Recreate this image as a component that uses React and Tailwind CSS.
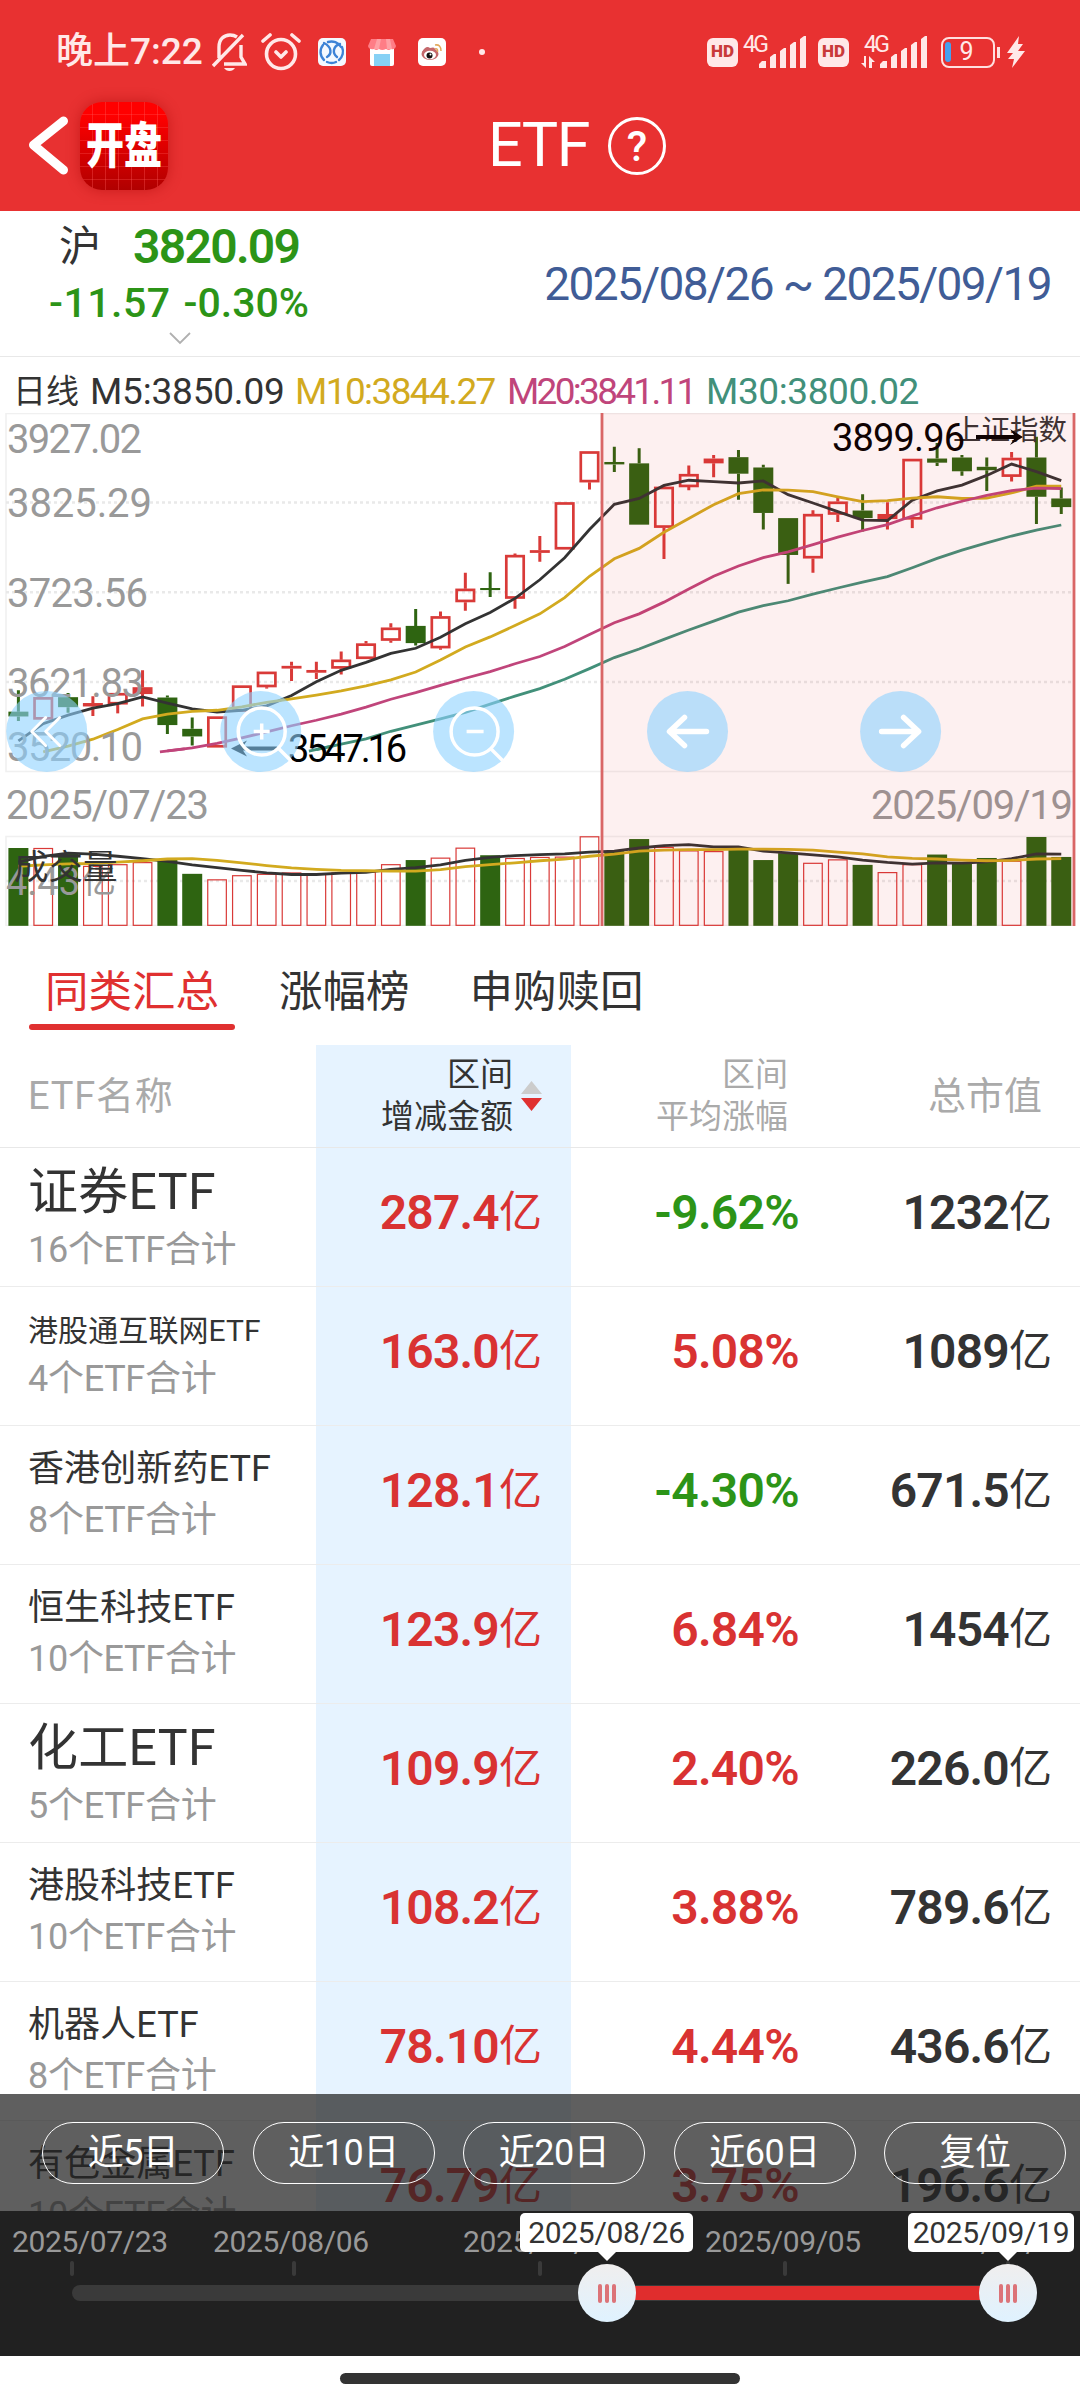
import clsx from 'clsx'

const candles = [
  // [direction, high, bodyTop, bodyBottom, low, volumeTop]
  ['down', 843, 905, 919, 932, 1301],
  ['up', 863, 863, 928, 928, 1301],
  ['down', 851, 863, 892, 908, 1316],
  ['up', 860, 880, 890, 918, 1353],
  ['up', 851, 851, 884, 910, 1348],
  ['up', 785, 834, 854, 890, 1342],
  ['down', 858, 864, 944, 970, 1335],
  ['down', 922, 955, 977, 1003, 1376],
  ['up', 919, 919, 1009, 1009, 1392],
  ['up', 829, 829, 905, 905, 1380],
  ['up', 789, 789, 834, 838, 1376],
  ['up', 760, 772, 780, 816, 1372],
  ['up', 760, 784, 792, 810, 1376],
  ['up', 730, 754, 780, 797, 1372],
  ['up', 700, 707, 752, 752, 1370],
  ['up', 648, 661, 699, 705, 1348],
  ['down', 607, 656, 706, 713, 1336],
  ['up', 614, 628, 721, 725, 1329],
  ['up', 502, 548, 587, 612, 1300],
  ['down', 500, 546, 552, 572, 1322],
  ['up', 446, 450, 577, 606, 1330],
  ['up', 395, 436, 444, 470, 1327],
  ['up', 297, 297, 434, 434, 1326],
  ['up', 149, 149, 239, 260, 1267],
  ['down', 136, 180, 187, 209, 1310],
  ['down', 140, 184, 362, 362, 1275],
  ['up', 250, 252, 371, 462, 1298],
  ['up', 190, 215, 253, 262, 1308],
  ['up', 160, 170, 184, 224, 1310],
  ['down', 145, 166, 214, 290, 1305],
  ['down', 188, 196, 328, 376, 1336],
  ['down', 343, 343, 450, 534, 1316],
  ['up', 320, 331, 460, 502, 1344],
  ['up', 283, 295, 333, 354, 1334],
  ['down', 274, 321, 343, 382, 1350],
  ['up', 297, 331, 346, 376, 1371],
  ['up', 171, 171, 347, 372, 1348],
  ['down', 125, 170, 182, 192, 1320],
  ['down', 160, 167, 207, 220, 1345],
  ['down', 167, 194, 204, 264, 1330],
  ['up', 151, 168, 223, 237, 1338],
  ['down', 107, 167, 281, 360, 1269],
  ['down', 254, 286, 311, 331, 1327],
]

const maLines = [
  { color: '#333333', start: 0, data: [990, 940, 915, 895, 882, 862, 880, 897, 906, 901, 888, 858, 818, 785, 762, 736, 721, 689, 650, 617, 576, 522, 458, 376, 303, 286, 248, 233, 237, 241, 235, 275, 299, 324, 349, 350, 291, 264, 247, 219, 186, 208, 234] },
  { color: '#d2aa1f', start: 1, data: [1022, 1005, 985, 957, 926, 912, 904, 901, 891, 878, 868, 857, 845, 830, 813, 790, 755, 717, 688, 655, 621, 574, 512, 461, 431, 384, 344, 304, 272, 261, 262, 266, 281, 295, 292, 285, 281, 286, 285, 270, 250, 250] },
  { color: '#c0457b', start: 5.7, data: [1022, 1013] },
  { color: '#c0457b', start: 6, data: [1019, 1010, 997, 981, 964, 946, 930, 912, 892, 869, 850, 829, 808, 789, 766, 745, 716, 681, 647, 621, 587, 549, 512, 482, 458, 441, 420, 398, 379, 362, 337, 313, 294, 277, 263, 256, 257] },
  { color: '#42907a', start: 11.7, data: [1020, 1004] },
  { color: '#42907a', start: 12, data: [1015, 999, 984, 962, 944, 926, 907, 883, 860, 838, 811, 780, 748, 723, 695, 668, 642, 616, 597, 583, 564, 546, 529, 513, 487, 460, 436, 415, 395, 378, 363] },
  { color: '#333333', start: 0, data: [1342, 1325, 1316, 1319, 1325, 1332, 1340, 1350, 1358, 1366, 1373, 1378, 1378, 1374, 1372, 1363, 1358, 1350, 1337, 1328, 1323, 1320, 1318, 1313, 1310, 1301, 1294, 1291, 1298, 1298, 1310, 1315, 1321, 1327, 1336, 1343, 1348, 1344, 1345, 1341, 1332, 1318, 1319] },
  { color: '#d2aa1f', start: 0, data: [1354, 1350, 1347, 1346, 1342, 1338, 1333, 1332, 1337, 1344, 1352, 1359, 1363, 1366, 1367, 1368, 1368, 1364, 1355, 1349, 1344, 1338, 1333, 1325, 1319, 1310, 1307, 1306, 1306, 1304, 1304, 1305, 1307, 1313, 1318, 1327, 1331, 1333, 1336, 1338, 1337, 1333, 1332] },
]

const px = (i) => 18.4 + i * 24.83
const py = (v) => 400 + v / 2.904

const axisLabels = [
  { text: '3927.02', x: 7, y: 453, w: 135 },
  { text: '3825.29', x: 7, y: 517, w: 145 },
  { text: '3723.56', x: 7, y: 607, w: 141 },
  { text: '3621.83', x: 7, y: 697, w: 137 },
  { text: '3520.10', x: 7, y: 761, w: 136 },
  { text: '2025/07/23', x: 6, y: 819, w: 203 },
  { text: '2025/09/19', x: 871, y: 819, w: 202 },
]

const rows = [
  { name: '证券ETF', count: 16, size: 'lg', amount: '287.4', avg: '-9.62%', total: '1232' },
  { name: '港股通互联网ETF', count: 4, size: 'sm', amount: '163.0', avg: '5.08%', total: '1089' },
  { name: '香港创新药ETF', count: 8, size: 'md', amount: '128.1', avg: '-4.30%', total: '671.5' },
  { name: '恒生科技ETF', count: 10, size: 'md', amount: '123.9', avg: '6.84%', total: '1454' },
  { name: '化工ETF', count: 5, size: 'lg', amount: '109.9', avg: '2.40%', total: '226.0' },
  { name: '港股科技ETF', count: 10, size: 'md', amount: '108.2', avg: '3.88%', total: '789.6' },
  { name: '机器人ETF', count: 8, size: 'md', amount: '78.10', avg: '4.44%', total: '436.6' },
  { name: '有色金属ETF', count: 10, size: 'md', amount: '76.79', avg: '3.75%', total: '196.6' },
]

const nameSizes = {
  lg: 'text-[50px] leading-[66px] tracking-[0.3px]',
  md: 'text-[36px] leading-[51px] tracking-[0.1px]',
  sm: 'text-[30px] leading-[46px] tracking-[0.1px]',
}

const sliderMarks = [
  { label: '2025/07/23', x: 72, text: 12 },
  { label: '2025/08/06', x: 294, text: 213 },
  { label: '2025/08/22', x: 540, text: 463 },
  { label: '2025/09/05', x: 785, text: 705 },
  { label: '2025/09/19', x: 1008, text: 915 },
]

const handles = [
  { label: '2025/08/26', x: 607, left: 520, width: 173 },
  { label: '2025/09/19', x: 1008, left: 908, width: 166 },
]

const Signal = ({ data }) => (
  <svg className="overflow-visible" width="67" height="36" viewBox="0 0 67 36" fill="#ffe8e8">
    <text x="3" y="18" fontSize="23" textLength="26" fontFamily="Roboto">4G</text>
    <path d="M19 34v-4l3-3h4v7zM30 34V23l4-3h2v14zM40 34V17l4-3h2v20zM50 34V11l4-3h2v26zM60 34V5l4-3h2v32z" />
    {data && <path d="M3 22h2v12l-5-5h3zM8 34V22l6 6h-3v6z" />}
  </svg>
)

const HdBadge = () => (
  <span className="flex h-[29px] w-[31px] items-center justify-center rounded-[6px] bg-[#ffe8e8] text-[17px] font-black text-[#c93a3a]">HD</span>
)

const StatusBar = () => (
  <div className="flex h-[104px] items-center pl-[56px] text-[#ffe8e8]">
    <span className="w-[150px] text-[37px] font-medium whitespace-nowrap">晚上7:22</span>
    <svg className="ml-[6px]" width="35" height="40" viewBox="0 0 35 40" fill="none" stroke="#ffe8e8" strokeWidth="3.4">
      <path d="M1 34L31 3M7 26V15C7 7 12 3 18 3q4 0 7 2M29 13v12l4 7H12" />
      <path d="M12 36h11q-2 3-5.500 3T12 36z" fill="#ffe8e8" stroke="none" />
    </svg>
    <svg className="ml-[14px]" width="40" height="40" viewBox="0 0 40 40" fill="none" stroke="#ffe8e8" strokeWidth="3.6" strokeLinecap="round">
      <circle cx="20" cy="22" r="14.500" />
      <path d="M15 20l5 5 5-5M2 9l7-6M38 9l-7-6" strokeLinejoin="round" />
    </svg>
    <svg className="ml-[17px]" width="28" height="28" viewBox="0 0 28 28" fill="none">
      <rect width="28" height="28" rx="5" fill="#f4f9ff" />
      <path d="M6 5C14 9 14 16 9 19M5 7a11 11 0 001 15M10 4a11 11 0 0113 5M19 19c-5-4-4-11 3-13M24 9a11 11 0 01-3 13M9 24q5 2 9 0" stroke="#3d83d6" strokeWidth="2.400" strokeLinecap="round" />
    </svg>
    <svg className="ml-[22px]" width="28" height="28" viewBox="0 0 28 28">
      <path d="M2 9h24v17q0 2-2 2H4q-2 0-2-2z" fill="#fff" />
      <path d="M6 16h16v12H6z" fill="#86d1f5" />
      <path d="M3 1h22l3 7q-1 4-5 3-2 2-5 0-4 2-7 0-3 2-5 0-5 1-6-3z" fill="#ff7d86" />
      <path d="M9 1h4l-2 10H6zM18 1h4l2 10h-5z" fill="#ffa0a5" />
    </svg>
    <svg className="ml-[22px]" width="28" height="28" viewBox="0 0 28 28" fill="none">
      <rect width="28" height="28" rx="5" fill="#fff" />
      <ellipse cx="12" cy="16" rx="8.500" ry="6" fill="#c4686c" />
      <path d="M4 14q4-7 8-4 6-2 5 3" fill="#c4686c" />
      <ellipse cx="12" cy="17" rx="6" ry="4.200" fill="#fff" />
      <circle cx="11.500" cy="17.500" r="3" fill="#111" />
      <circle cx="12.500" cy="16.500" r="1" fill="#fff" />
      <path d="M17 7q6-1 6 6M17 11q3-1 2.500 3" stroke="#e3a95c" strokeWidth="1.500" />
    </svg>
    <span className="ml-[33px] h-[6px] w-[6px] rounded-full bg-[#ffe8e8]" />
    <div className="ml-[222px] flex items-center">
      <HdBadge />
      <span className="ml-[2px]"><Signal /></span>
      <span className="ml-[11px]"><HdBadge /></span>
      <span className="ml-[12px]"><Signal data /></span>
      <span className="relative ml-[13px] flex h-[31px] w-[54px] items-center justify-center rounded-[8px] border-[2.5px] border-[#ffe0e0] pr-[3px] text-[25px]">
        <span className="absolute top-[3px] left-[2px] h-[20px] w-[6px] rounded-[3px] bg-[#46a0ee]" />9
      </span>
      <span className="ml-[2px] h-[11px] w-[3px] bg-[#ffe0e0]" />
      <svg className="ml-[7px]" width="18" height="32" viewBox="0 0 18 32" fill="#ffe8e8">
        <path d="M12 0L0 17h6l-5 6h6l-2 9L18 15h-7l5-7h-5z" />
      </svg>
    </div>
  </div>
)

const Header = () => (
  <header className="h-[211px] shrink-0 bg-[#e83131] text-white">
    <StatusBar />
    <div className="flex h-[84px] items-center">
      <svg className="ml-[28px]" width="42" height="64" viewBox="0 0 42 64" fill="none" stroke="#fff" strokeWidth="9" strokeLinecap="round" strokeLinejoin="round">
        <path d="M35.500 7L5.500 31l30 25" />
      </svg>
      <div className="ml-[10px] flex h-[88px] w-[88px] items-center justify-center rounded-[22px] bg-[repeating-linear-gradient(90deg,transparent_0_12px,rgba(255,90,90,.35)_12px_13px),repeating-linear-gradient(180deg,transparent_0_12px,rgba(255,90,90,.3)_12px_13px),linear-gradient(#ff0000_15%,#b00000)] shadow-[0_0_14px_rgba(160,0,0,.45)]">
        <span className="scale-y-[1.3] text-[38px] leading-none font-black whitespace-nowrap">开盘</span>
      </div>
      <h1 className="ml-[320px] w-[112px] text-[61px] tracking-[-1.5px]">ETF</h1>
      <span className="ml-[8px] flex h-[58px] w-[58px] items-center justify-center rounded-full border-[3.5px] border-white text-[42px] font-medium">?</span>
    </div>
  </header>
)

const Quote = () => (
  <section className="flex h-[146px] shrink-0 items-start justify-between border-b border-[#e8e8e8] text-[#2c9417]">
    <div className="flex w-[360px] flex-col items-center">
      <div className="flex h-[67px] w-full items-center pt-[4px] pl-[59px]">
        <span className="text-[42px] text-[#333]">沪</span>
        <span className="ml-[32px] text-[48px] font-semibold tracking-[-1.7px]">3820.09</span>
      </div>
      <div className="flex h-[52px] w-full items-center gap-[13px] pl-[49px] text-[41px] font-medium">
        <span className="tracking-[0.5px]">-11.57</span>
        <span>-0.30%</span>
      </div>
      <svg className="mt-[2px]" width="22" height="14" viewBox="0 0 22 14" fill="none" stroke="#b0b0b0" strokeWidth="1.800">
        <path d="M1 1l10 10L21 1" />
      </svg>
    </div>
    <span className="mr-[29px] pt-[42px] text-[46px] leading-[62px] tracking-[-1.6px] text-[#405c96]">2025/08/26 ~ 2025/09/19</span>
  </section>
)

const Legend = () => (
  <div className="flex h-[56px] shrink-0 items-center pt-[13px] pl-[13px] text-[37px] whitespace-nowrap text-[#333]">
    <span className="w-[77px] text-[33px]">日线</span>
    <span className="w-[205px] tracking-[-0.2px]">M5:3850.09</span>
    <span className="w-[212px] tracking-[-1.6px] text-[#d2aa1f]">M10:3844.27</span>
    <span className="w-[199px] tracking-[-2.7px] text-[#c0457b]">M20:3841.11</span>
    <span className="tracking-[-0.4px] text-[#42907a]">M30:3800.02</span>
  </div>
)

const Candle = ({ index, item }) => {
  const [dir, high, top, bottom, low, vol] = item
  const x = px(index)
  const up = dir === 'up'
  const color = up ? '#d93a38' : '#2e6411'
  const bodyH = py(bottom) - py(top)
  const hollow = up && bottom - top > 21
  return (
    <g fill={color} stroke={color}>
      <path strokeWidth="3" fill="none" d={`M${x} ${py(high)}V${py(top)}M${x} ${py(bottom)}V${py(low)}`} />
      {hollow
        ? <rect x={x - 8.700} y={py(top) + 1.200} width="17.400" height={bodyH - 2.400} fill="none" strokeWidth="2.700" />
        : <rect x={x - 10} y={py(top)} width="20" height={bodyH} stroke="none" />}
      {up
        ? <rect x={x - 9.300} y={py(vol) + 0.500} width="18.600" height={py(1527) - py(vol) - 1} fill="none" strokeWidth="1.200" />
        : <rect x={x - 10} y={py(vol)} width="20" height={py(1527) - py(vol)} stroke="none" />}
    </g>
  )
}

const chartButtons = [
  { id: 'prev', cx: 46.700, d: 'M-1-14L-15 0-1 14M13-14L-1 0l14 14', w: 3 },
  { id: 'in', cx: 260.700, d: 'M-7 0H9M1-8V8M18 17l12 12', zoom: true, w: 3.500 },
  { id: 'out', cx: 473.600, d: 'M-7 0H10M17 17l12 12', zoom: true, w: 3.500 },
  { id: 'left', cx: 687.500, d: 'M19 0H-17M-3-14L-18 0-3 14', w: 5.500 },
  { id: 'right', cx: 900.600, d: 'M-19 0H17M3-14L18 0 3 14', w: 5.500 },
]

const Chart = () => (
  <svg className="block shrink-0" width="1080" height="513" viewBox="0 413 1080 513" fontFamily="Roboto, 'Noto Sans CJK SC', sans-serif">
    <g fill="none" stroke="#f0f0f0" strokeWidth="1.500">
      <path d="M6 413.500H1074V771.500H6zM6 836.500H1074V925.500H6z" />
      <path d="M6 502.600H1074M6 592.200H1074M6 682H1074M6 881H1074" stroke="#e9e9e9" strokeWidth="2.500" strokeDasharray="3 3" />
    </g>
    {candles.map((item, i) => <Candle key={i} index={i} item={item} />)}
    {maLines.map((line, n) => (
      <polyline
        key={n}
        fill="none"
        stroke={line.color}
        strokeWidth="2.800"
        points={line.data.map((v, i) => `${px(line.start + i)},${py(v)}`).join(' ')}
      />
    ))}
    <g fill="#999" fontSize="40">
      {axisLabels.map((l) => (
        <text key={l.text} x={l.x} y={l.y} textLength={l.w}>{l.text}</text>
      ))}
      <text x="6" y="895" fontSize="38" textLength="74">4.43</text>
      <text x="82" y="893" fontSize="34">亿</text>
    </g>
    <text x="14" y="879" fontSize="34.500" fill="#333">成交量</text>
    <text x="953" y="440" fontSize="28.500" fill="#333">上证指数</text>
    <g fontSize="38" fill="#000">
      <text x="832" y="451" textLength="133">3899.96</text>
      <text x="288" y="761.500" textLength="119">3547.16</text>
      <path d="M976 435h38l-4-6 13 8-13 8 4-6h-38zM277 746.500h-34l4-6-16 8 16 8-4-6h34z" />
    </g>
    <path d="M602 413H1074V926H602z" fill="#e33128" fillOpacity="0.07" />
    <path d="M602 413V926M1074 413V926" stroke="#d96666" strokeWidth="2.800" />
    {chartButtons.map((b) => (
      <g key={b.id} transform={`translate(${b.cx} 731.500)`} fill="none" stroke="#fff" strokeWidth={b.w} strokeLinecap={b.zoom ? 'butt' : 'round'} strokeLinejoin="round">
        <circle r="40.500" fill="#8ed2ff" fillOpacity="0.6" stroke="none" />
        {b.zoom && <circle cx="1" cy="0" r="23.500" />}
        <path d={b.d} />
      </g>
    ))}
  </svg>
)

const Tabs = () => (
  <nav className="flex h-[119px] shrink-0 gap-[28px] pt-[35px] pl-[29px] text-[43.5px] text-[#333]">
    {['同类汇总', '涨幅榜', '申购赎回'].map((tab, i) => (
      <div
        key={tab}
        className={clsx('flex h-[72px] justify-center px-[16px] leading-[64px]', i === 0 && 'text-[#e03030]')}
      >
        <span className="relative">
          {tab}
          {i === 0 && <span className="absolute top-[63px] -right-[16px] -left-[16px] h-[6px] rounded-full bg-[#e03030]" />}
        </span>
      </div>
    ))}
  </nav>
)

const TableHead = () => (
  <div className="flex h-[103px] shrink-0 border-b border-[#e8e8e8] text-[38px] text-[#aaa]">
    <div className="flex w-[316px] items-center pl-[28px] tracking-[0.8px]">ETF名称</div>
    <div className="flex w-[255px] items-center justify-end gap-[8px] bg-[#e6f3ff] pr-[29px]">
      <div className="text-right text-[33px] leading-[42px] text-[#333]">区间<br />增减金额</div>
      <svg width="21" height="30" viewBox="0 0 21 30">
        <path d="M10.500 0L21 13H0z" fill="#ccc" />
        <path d="M10.500 30L21 17H0z" fill="#e03030" />
      </svg>
    </div>
    <div className="flex w-[217px] items-center justify-end text-right text-[33px] leading-[42px]">区间<br />平均涨幅</div>
    <div className="flex flex-1 items-center justify-end pr-[38px]">总市值</div>
  </div>
)

const Amount = ({ value }) => (
  <span className="flex items-center">
    <span className="tracking-[-0.8px]">{value}</span>
    <span className="pb-[2px] text-[43px] font-normal">亿</span>
  </span>
)

const Row = ({ row }) => (
  <div className="flex h-[139px] shrink-0 border-b border-[#ececec] text-[48px] font-semibold text-[#333]">
    <div className="flex w-[316px] flex-col justify-center pl-[28px] font-normal whitespace-nowrap">
      <span className={nameSizes[row.size]}>{row.name}</span>
      <span className="text-[36px] leading-[51px] tracking-[-0.3px] text-[#999]">{row.count}个ETF合计</span>
    </div>
    <div className="flex w-[255px] items-center justify-end bg-[#e6f3ff] pr-[29px] pb-[8px] text-[#d93232]"><Amount value={row.amount} /></div>
    <div className={clsx('flex w-[228px] items-center justify-end pb-[8px] tracking-[-0.7px]', row.avg.startsWith('-') ? 'text-[#2c9417]' : 'text-[#d93232]')}>{row.avg}</div>
    <div className="flex flex-1 items-center justify-end pr-[28px] pb-[8px]"><Amount value={row.total} /></div>
  </div>
)

const RangeButtons = () => (
  <div className="absolute inset-x-0 bottom-0 flex h-[117px] items-center justify-between bg-[#212121]/72 pr-[14px] pl-[42px]">
    {['近5日', '近10日', '近20日', '近60日', '复位'].map((label) => (
      <button key={label} className="h-[62px] w-[182px] rounded-full border border-white text-[36px] leading-[58px] tracking-[-0.5px] text-white">{label}</button>
    ))}
  </div>
)

const RangeSlider = () => (
  <section className="relative h-[145px] shrink-0 bg-[#212121]">
    {sliderMarks.map((m) => (
      <div key={m.label}>
        <span className="absolute top-[11px] text-[30px] leading-[40px] tracking-[-0.4px] text-[#999]" style={{ left: m.text }}>{m.label}</span>
        <span className="absolute top-[50px] -ml-[2px] h-[15px] w-[4px] rounded-full bg-[#3a3a3a]" style={{ left: m.x }} />
      </div>
    ))}
    <div className="absolute top-[74px] left-[72px] h-[16px] w-[936px] rounded-full bg-[#3a3a3a]" />
    <div className="absolute top-[75px] left-[607px] h-[14px] w-[401px] bg-[#e02d2d]" />
    {handles.map((h) => (
      <div key={h.label}>
        <div className="absolute top-[2px] flex h-[39px] items-center justify-center rounded-[5px] bg-white text-[30px] tracking-[-0.3px] text-[#333]" style={{ left: h.left, width: h.width }}>{h.label}</div>
        <div className="absolute top-[41px] -ml-[9px] border-x-[9px] border-t-[9px] border-x-transparent border-t-white" style={{ left: h.x }} />
        <div className="absolute top-[53px] -ml-[29px] flex h-[58px] w-[58px] items-center justify-center gap-[3px] rounded-full bg-linear-to-b from-[#f0eeee] to-[#dff2ff]" style={{ left: h.x }}>
          <i className="h-[19px] w-[4px] rounded-full bg-[#dc7378]" />
          <i className="h-[19px] w-[4px] rounded-full bg-[#dc7378]" />
          <i className="h-[19px] w-[4px] rounded-full bg-[#dc7378]" />
        </div>
      </div>
    ))}
  </section>
)

const App = () => {
  return (
    <div className="flex h-[2400px] w-[1080px] flex-col overflow-hidden bg-white font-[Roboto,'Noto_Sans_CJK_SC',sans-serif]">
      <Header />
      <Quote />
      <Legend />
      <Chart />
      <Tabs />
      <main className="relative flex h-[1166px] shrink-0 flex-col overflow-hidden">
        <TableHead />
        {rows.map((row) => <Row key={row.name} row={row} />)}
        <RangeButtons />
      </main>
      <RangeSlider />
      <footer className="flex h-[44px] justify-center pt-[17px]">
        <div className="h-[11px] w-[400px] rounded-full bg-[#333]" />
      </footer>
    </div>
  )
}

export default App
